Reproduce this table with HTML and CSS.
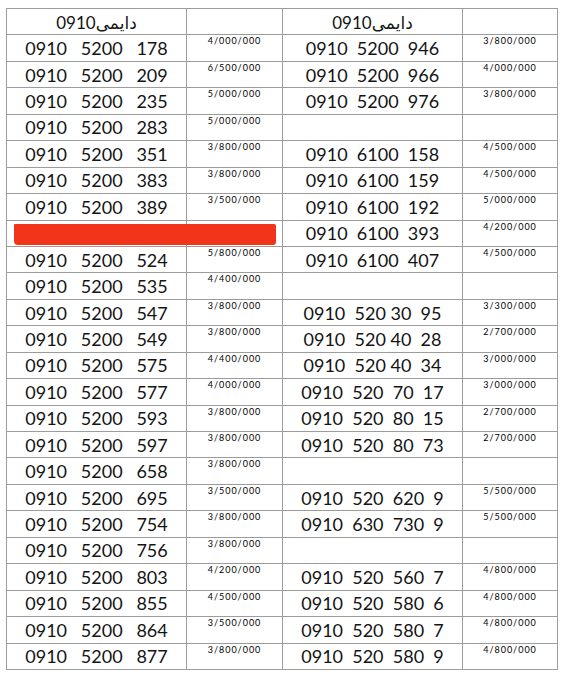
FILE: index.html
```html
<!DOCTYPE html>
<html lang="fa">
<head>
<meta charset="utf-8">
<title>0910 دایمی</title>
<link rel="stylesheet" href="styles.css">
</head>
<body>
<table class="sheet">
  <colgroup>
    <col class="c-num"><col class="c-price"><col class="c-num"><col class="c-price2">
  </colgroup>
  <thead>
    <tr class="head">
      <th class="num"><span dir="rtl">دایمی0910</span></th>
      <th></th>
      <th class="num"><span dir="rtl">دایمی0910</span></th>
      <th></th>
    </tr>
  </thead>
  <tbody>
    <tr><td class="num w3">0910   5200   178</td><td class="price">4/000/000</td><td class="num">0910  5200  946</td><td class="price">3/800/000</td></tr>
    <tr><td class="num w3">0910   5200   209</td><td class="price">6/500/000</td><td class="num">0910  5200  966</td><td class="price">4/000/000</td></tr>
    <tr><td class="num w3">0910   5200   235</td><td class="price">5/000/000</td><td class="num">0910  5200  976</td><td class="price">3/800/000</td></tr>
    <tr><td class="num w3">0910   5200   283</td><td class="price">5/000/000</td><td class="num"></td><td class="price"></td></tr>
    <tr><td class="num w3">0910   5200   351</td><td class="price">3/800/000</td><td class="num">0910  6100  158</td><td class="price">4/500/000</td></tr>
    <tr><td class="num w3">0910   5200   383</td><td class="price">3/800/000</td><td class="num">0910  6100  159</td><td class="price">4/500/000</td></tr>
    <tr><td class="num w3">0910   5200   389</td><td class="price">3/500/000</td><td class="num">0910  6100  192</td><td class="price">5/000/000</td></tr>
    <tr><td class="num redacted"><div class="scribble"></div></td><td class="price"></td><td class="num">0910  6100  393</td><td class="price">4/200/000</td></tr>
    <tr><td class="num w3">0910   5200   524</td><td class="price">5/800/000</td><td class="num">0910  6100  407</td><td class="price">4/500/000</td></tr>
    <tr><td class="num w3">0910   5200   535</td><td class="price">4/400/000</td><td class="num"></td><td class="price"></td></tr>
    <tr><td class="num w3">0910   5200   547</td><td class="price">3/800/000</td><td class="num">0910  520 30  95</td><td class="price">3/300/000</td></tr>
    <tr><td class="num w3">0910   5200   549</td><td class="price">3/800/000</td><td class="num">0910  520 40  28</td><td class="price">2/700/000</td></tr>
    <tr><td class="num w3">0910   5200   575</td><td class="price">4/400/000</td><td class="num">0910  520 40  34</td><td class="price">3/000/000</td></tr>
    <tr><td class="num w3">0910   5200   577</td><td class="price">4/000/000</td><td class="num">0910  520  70  17</td><td class="price">3/000/000</td></tr>
    <tr><td class="num w3">0910   5200   593</td><td class="price">3/800/000</td><td class="num">0910  520  80  15</td><td class="price">2/700/000</td></tr>
    <tr><td class="num w3">0910   5200   597</td><td class="price">3/800/000</td><td class="num">0910  520  80  73</td><td class="price">2/700/000</td></tr>
    <tr><td class="num w3">0910   5200   658</td><td class="price">3/800/000</td><td class="num"></td><td class="price"></td></tr>
    <tr><td class="num w3">0910   5200   695</td><td class="price">3/500/000</td><td class="num">0910  520  620  9</td><td class="price">5/500/000</td></tr>
    <tr><td class="num w3">0910   5200   754</td><td class="price">3/800/000</td><td class="num">0910  630  730  9</td><td class="price">5/500/000</td></tr>
    <tr><td class="num w3">0910   5200   756</td><td class="price">3/800/000</td><td class="num"></td><td class="price"></td></tr>
    <tr><td class="num w3">0910   5200   803</td><td class="price">4/200/000</td><td class="num">0910  520  560  7</td><td class="price">4/800/000</td></tr>
    <tr><td class="num w3">0910   5200   855</td><td class="price">4/500/000</td><td class="num">0910  520  580  6</td><td class="price">4/800/000</td></tr>
    <tr><td class="num w3">0910   5200   864</td><td class="price">3/500/000</td><td class="num">0910  520  580  7</td><td class="price">4/800/000</td></tr>
    <tr><td class="num w3">0910   5200   877</td><td class="price">3/800/000</td><td class="num">0910  520  580  9</td><td class="price">4/800/000</td></tr>
  </tbody>
</table>
</body>
</html>
```
FILE: styles.css
```css
html, body {
  margin: 0;
  padding: 0;
  background: #ffffff;
}

body {
  padding: 8px 0 0 6px;
  font-family: Lato, "DejaVu Sans", sans-serif;
  color: #141414;
}

.sheet {
  border-collapse: collapse;
  table-layout: fixed;
  width: 551px;
}

.c-num { width: 180px; }
.c-price { width: 96px; }
.c-price2 { width: 95px; }

.sheet tr {
  height: 26.44px;
}

.sheet th,
.sheet td {
  border: 1px solid #9c9c9c;
  padding: 0;
  overflow: visible;
}

.head th {
  font-weight: normal;
  font-size: 17px;
  text-align: center;
  vertical-align: middle;
  padding-top: 1px;
}

.num {
  font-size: 18px;
  text-align: center;
  vertical-align: middle;
  white-space: pre;
  padding-top: 1px;
}

.price {
  font-size: 9px;
  letter-spacing: 1px;
  color: #000000;
  text-align: center;
  vertical-align: top;
  padding-top: 2px;
  white-space: nowrap;
}

.redacted {
  position: relative;
}

.scribble {
  position: absolute;
  left: 7px;
  top: 3px;
  width: 262px;
  height: 21px;
  background: #f2351a;
  border-radius: 1px 2px 3px 4px;
}
```
